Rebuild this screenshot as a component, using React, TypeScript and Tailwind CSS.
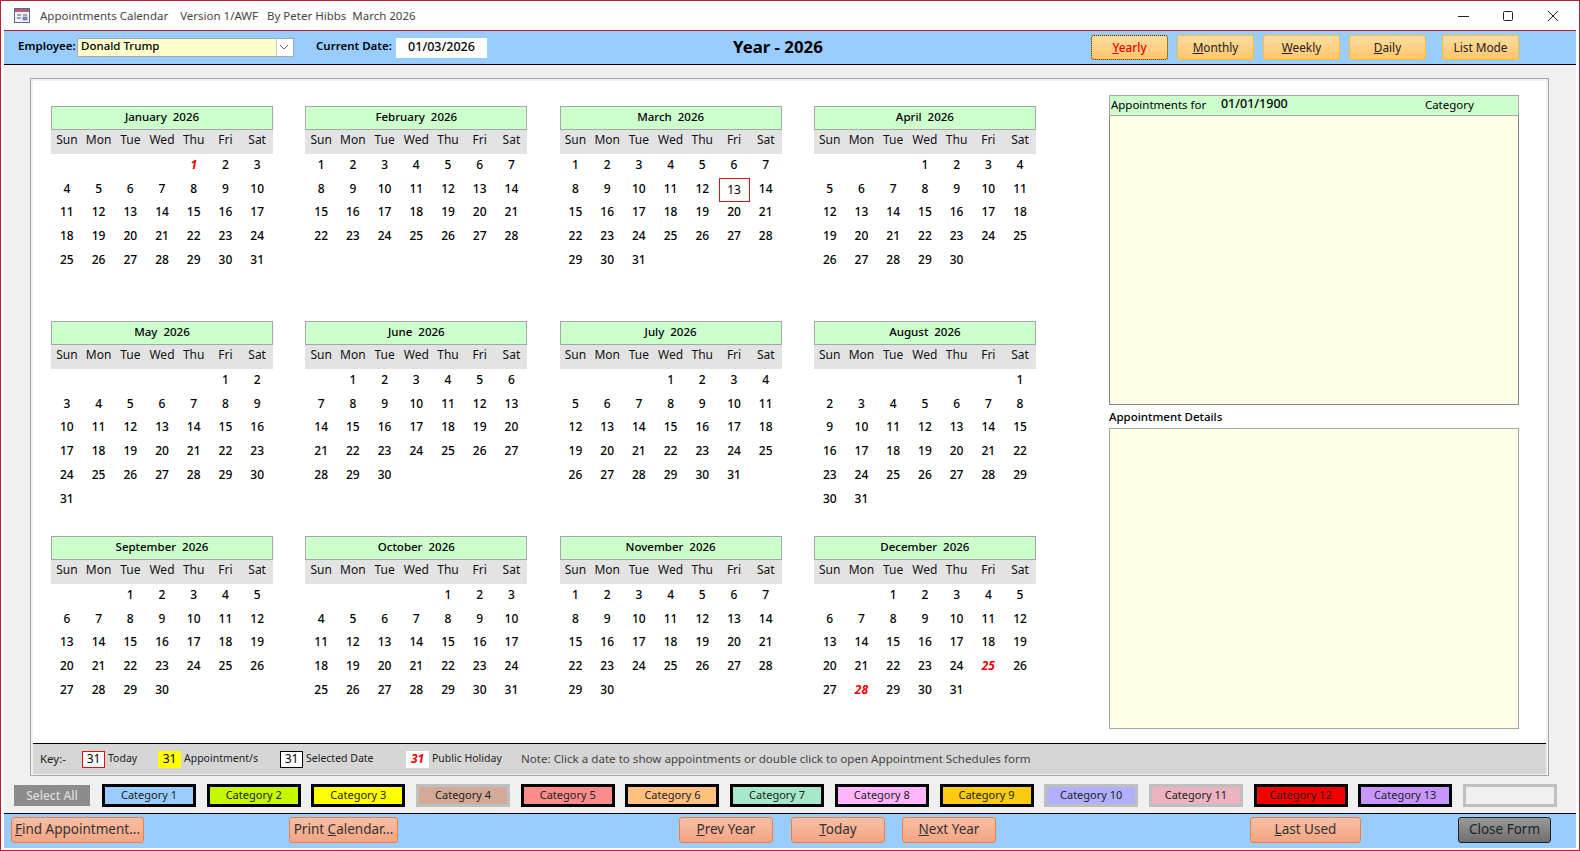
import type { ReactNode } from 'react';

const months = [
  'January', 'February', 'March', 'April', 'May', 'June',
  'July', 'August', 'September', 'October', 'November', 'December',
];
const weekdays = ['Sun', 'Mon', 'Tue', 'Wed', 'Thu', 'Fri', 'Sat'];

// month index and day of the public holidays shown in red
const holidays = ['0-1', '11-25', '11-28'];

const categories = [
  { label: 'Category 1', className: 'bg-[#99ccff] border-black' },
  { label: 'Category 2', className: 'bg-[#c6f800] border-black' },
  { label: 'Category 3', className: 'bg-[#ffff00] border-black' },
  { label: 'Category 4', className: 'bg-[#d3aa98] border-[#bfbfbf]' },
  { label: 'Category 5', className: 'bg-[#ff8c8c] border-black' },
  { label: 'Category 6', className: 'bg-[#ffc080] border-black' },
  { label: 'Category 7', className: 'bg-[#a6e8ca] border-black' },
  { label: 'Category 8', className: 'bg-[#ffb6ff] border-black' },
  { label: 'Category 9', className: 'bg-[#fbcb11] border-black' },
  { label: 'Category 10', className: 'bg-[#b0b0ff] border-[#bfbfbf]' },
  { label: 'Category 11', className: 'bg-[#ecb4c0] border-[#bfbfbf]' },
  { label: 'Category 12', className: 'bg-[#f50000] border-black' },
  { label: 'Category 13', className: 'bg-[#c896ff] border-black' },
  { label: '', className: 'bg-[#f0f0f0] border-[#bfbfbf]' },
];

function MonthCard({ month }: { month: number }) {
  const first = new Date(2026, month, 1).getDay();
  const count = new Date(2026, month + 1, 0).getDate();
  const days = Array.from({ length: count }, (_, i) => i + 1);

  return (
    <div className="w-[222px] h-[215px]">
      <div className="h-[24px] pb-[2px] border border-[#a6a6a6] bg-[#ccffcc] flex items-center justify-center text-[11.5px] font-medium text-black whitespace-pre">
        {months[month]}  2026
      </div>
      <div className="h-[24px] pb-[4px] bg-[#e3e3e3] grid grid-cols-7 items-center text-center text-[12px] text-[#111]">
        {weekdays.map((d) => (
          <div key={d}>{d}</div>
        ))}
      </div>
      <div className="grid grid-cols-7 auto-rows-[23.8px] text-center text-[12px] font-medium text-black">
        {days.map((day) => {
          const isHoliday = holidays.includes(`${month}-${day}`);
          const isToday = month === 2 && day === 13;
          return (
            <div
              key={day}
              className="pb-[2px] flex items-center justify-center"
              style={day === 1 ? { gridColumnStart: first + 1 } : undefined}
            >
              {isToday ? (
                <span className="w-[31px] h-[24px] mt-[3px] shrink-0 border border-[#e01010] flex items-center justify-center font-normal">
                  {day}
                </span>
              ) : (
                <span className={isHoliday ? 'text-[#f00000] font-bold italic' : ''}>{day}</span>
              )}
            </div>
          );
        })}
      </div>
    </div>
  );
}

function TopButton({ children, active }: { children: ReactNode; active?: boolean }) {
  return (
    <div
      className={`w-[77px] h-[25px] rounded-[3px] border border-[#fdbf2d] bg-gradient-to-b from-[#ffdd9f] to-[#ffc56c] flex items-center justify-center text-[11.8px] ${
        active ? 'text-[#f00000] font-medium outline-1 outline-dotted -outline-offset-1 outline-[#3a3010]' : 'text-[#222]'
      }`}
    >
      {children}
    </div>
  );
}

function BottomButton({ children, className }: { children: ReactNode; className: string }) {
  return (
    <div
      className={`h-[26px] pb-[1px] rounded-[3px] border border-[#ed8144] bg-gradient-to-b from-[#f7bfa6] to-[#f4a482] flex items-center justify-center text-[13.5px] text-[#333] ${className}`}
    >
      {children}
    </div>
  );
}

function KeyBox({ className, children }: { className: string; children: ReactNode }) {
  return (
    <div className={`w-[23px] h-[17px] flex items-center justify-center text-[12px] ${className}`}>
      {children}
    </div>
  );
}

export default function App() {
  return (
    <div
      className="w-[1580px] h-[851px] overflow-hidden bg-white border border-[#b5202e] flex flex-col text-black"
      style={{ fontFamily: '"Noto Sans", Tahoma, sans-serif' }}
    >
      {/* Title bar */}
      <div className="h-[29px] shrink-0 flex items-center pl-[13px] text-[11.5px] text-[#444]">
        <svg width="17" height="16" viewBox="0 0 17 16" className="mr-[9px]">
          <rect x="0.5" y="0.5" width="15" height="14" fill="#eef1f8" stroke="#5a6a8c" />
          <rect x="1" y="1" width="14" height="3" fill="#b5607a" />
          <path d="M3 7h4M3 10h4M9 7h4" stroke="#44597f" strokeWidth="1" />
          <rect x="9" y="9" width="4" height="3" fill="#7f93bb" stroke="#44597f" strokeWidth="0.5" />
        </svg>
        <span className="whitespace-pre">Appointments Calendar    Version 1/AWF   By Peter Hibbs  March 2026</span>
        <div className="ml-auto flex items-center">
          <svg width="14" height="14" viewBox="0 0 14 14" className="mr-[31px]">
            <path d="M2 7.5h11" stroke="#222" strokeWidth="1" />
          </svg>
          <svg width="14" height="14" viewBox="0 0 14 14" className="mr-[31px]">
            <rect x="2.5" y="2.5" width="9" height="9" rx="1" fill="none" stroke="#222" strokeWidth="1" />
          </svg>
          <svg width="14" height="14" viewBox="0 0 14 14" className="mr-[19px]">
            <path d="M2 2l10 10M12 2L2 12" stroke="#222" strokeWidth="1" />
          </svg>
        </div>
      </div>

      <div className="flex-1 min-h-0 mx-[3px] mb-[2px] flex flex-col border-t border-[#b5202e]">
        {/* Top band */}
        <div className="h-[34px] shrink-0 bg-[#99ccff] border-b border-black flex items-center pl-[14px]">
          <span className="text-[11.5px] font-semibold w-[59px] pb-[3px]">Employee:</span>
          <div className="w-[217px] h-[19px] mb-[1px] bg-[#ffffcc] border border-[#a9a9a9] flex items-center justify-between text-[11.5px] font-medium pl-[3px]">
            <span className="pb-[2px]">Donald Trump</span>
            <div className="w-[17px] h-full bg-white border-l border-[#c8c8c8] flex items-center justify-center pr-[2px]">
              <svg width="10" height="6" viewBox="0 0 10 6">
                <path d="M1 1l4 4 4-4" fill="none" stroke="#666" strokeWidth="1" />
              </svg>
            </div>
          </div>
          <span className="ml-[22px] text-[11.5px] font-semibold w-[80px] pb-[3px]">Current Date:</span>
          <div className="w-[91px] h-[20px] bg-white flex items-center justify-center text-[12.5px] font-medium">
            01/03/2026
          </div>
          <span className="ml-[246px] w-[90px] pb-[1px] text-[16.8px] font-bold whitespace-nowrap">Year - 2026</span>
          <div className="ml-[268px] flex gap-[9px]">
            <TopButton active>
              <span><u>Y</u>early</span>
            </TopButton>
            <TopButton>
              <span><u>M</u>onthly</span>
            </TopButton>
            <TopButton>
              <span><u>W</u>eekly</span>
            </TopButton>
            <TopButton>
              <span><u>D</u>aily</span>
            </TopButton>
            <div className="ml-[7px]">
              <TopButton>List Mode</TopButton>
            </div>
          </div>
        </div>

        {/* Form body */}
        <div className="flex-1 min-h-0 bg-[#f0f0f0] flex flex-col">
          <div className="ml-[26px] mt-[13px] w-[1519px] h-[698px] border border-[#a6a6ad] flex flex-col">
            <div className="flex-1 min-h-0 border-x-2 border-t-2 border-[#f0f0f0] bg-white flex">
              <div className="ml-[18px] mt-[25px] grid grid-cols-4 gap-x-[32.3px] content-start">
                {months.map((_, i) => (
                  <MonthCard key={i} month={i} />
                ))}
              </div>
              <div className="ml-[73px] mt-[14px] w-[410px] flex flex-col">
                <div className="h-[21px] pb-[2px] border border-[#a6a6a6] bg-[#ccffcc] flex items-center pl-[1px] text-[11.5px]">
                  <span className="w-[110px]">Appointments for</span>
                  <span className="w-[204px] text-[12.5px] font-medium">01/01/1900</span>
                  <span>Category</span>
                </div>
                <div className="h-[289px] border-x border-b border-[#85858f] bg-[#ffffe5]" />
                <div className="h-[23px] flex items-center text-[11.5px] font-medium">Appointment Details</div>
                <div className="h-[301px] border border-[#a6a6ad] bg-[#ffffe5]" />
              </div>
            </div>
            {/* Key */}
            <div className="h-[31px] shrink-0 mx-[2px] mb-[1px] border-t border-black bg-[#d6d6d6] flex items-center pl-[7px] text-[10.5px] text-[#222]">
              <span className="w-[42px] text-[11.5px]">Key:-</span>
              <KeyBox className="bg-white border border-[#e01010] text-black">31</KeyBox>
              <span className="ml-[3px] w-[50px] pb-[1px]">Today</span>
              <KeyBox className="bg-[#ffff00] text-black">31</KeyBox>
              <span className="ml-[3px] w-[96px] pb-[1px]">Appointment/s</span>
              <KeyBox className="bg-white border border-black text-black">31</KeyBox>
              <span className="ml-[3px] w-[100px] pb-[1px]">Selected Date</span>
              <KeyBox className="bg-white text-[#f00000] font-bold italic">31</KeyBox>
              <span className="ml-[3px] w-[89px] pb-[1px]">Public Holiday</span>
              <span className="text-[11.6px] text-[#444]">
                Note: Click a date to show appointments or double click to open Appointment Schedules form
              </span>
            </div>
          </div>

          {/* Categories */}
          <div className="mt-[8px] ml-[10px] flex items-center">
            <div className="w-[76px] h-[21px] bg-[#8c8c8c] text-[#dcdcdc] text-[12px] font-medium flex items-center justify-center mr-[12px]">
              Select All
            </div>
            <div className="flex gap-[10.7px]">
              {categories.map((c, i) => (
                <div
                  key={i}
                  className={`w-[94px] h-[23px] shrink-0 border-[3px] flex items-center justify-center text-[11px] text-[#222] ${c.className}`}
                >
                  {c.label}
                </div>
              ))}
            </div>
          </div>
        </div>

        {/* Bottom band */}
        <div className="h-[35px] shrink-0 pb-[2px] bg-[#99ccff] border-t border-black flex items-center pl-[7px]">
          <BottomButton className="w-[133px]">
            <span><u>F</u>ind Appointment...</span>
          </BottomButton>
          <BottomButton className="w-[109px] ml-[145px]">
            <span>Print <u>C</u>alendar...</span>
          </BottomButton>
          <BottomButton className="w-[94px] ml-[281px]">
            <span><u>P</u>rev Year</span>
          </BottomButton>
          <BottomButton className="w-[94px] ml-[18px]">
            <span><u>T</u>oday</span>
          </BottomButton>
          <BottomButton className="w-[94px] ml-[17px]">
            <span><u>N</u>ext Year</span>
          </BottomButton>
          <BottomButton className="w-[111px] ml-[254px]">
            <span><u>L</u>ast Used</span>
          </BottomButton>
          <div className="w-[93px] h-[26px] pb-[1px] ml-[97px] rounded-[3px] border border-[#222] bg-gradient-to-b from-[#9a9a9a] to-[#6f6f6f] flex items-center justify-center text-[13.5px] text-[#222]">
            Close Form
          </div>
        </div>
      </div>
    </div>
  );
}
